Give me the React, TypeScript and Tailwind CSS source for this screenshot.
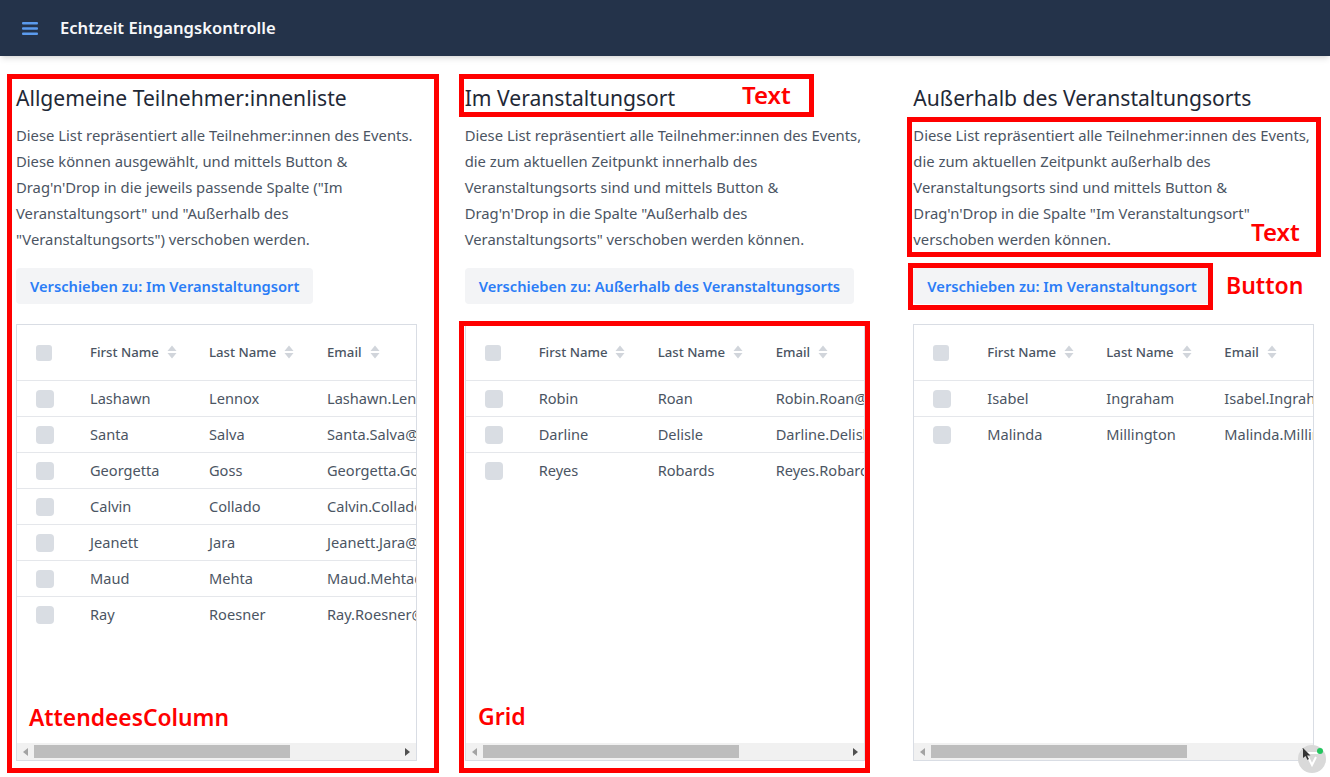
interface Attendee {
  first: string
  last: string
  email: string
}

interface ColumnProps {
  title: string
  lines: string[]
  button: string
  attendees: Attendee[]
}

const toAttendee = (first: string, last: string): Attendee => ({
  first,
  last,
  email: `${first}.${last}@example.com`,
})

const columns: ColumnProps[] = [
  {
    title: 'Allgemeine Teilnehmer:innenliste',
    lines: [
      'Diese List repräsentiert alle Teilnehmer:innen des Events.',
      'Diese können ausgewählt, und mittels Button &',
      'Drag\'n\'Drop in die jeweils passende Spalte ("Im',
      'Veranstaltungsort" und "Außerhalb des',
      '"Veranstaltungsorts") verschoben werden.',
    ],
    button: 'Verschieben zu: Im Veranstaltungsort',
    attendees: [
      toAttendee('Lashawn', 'Lennox'),
      toAttendee('Santa', 'Salva'),
      toAttendee('Georgetta', 'Goss'),
      toAttendee('Calvin', 'Collado'),
      toAttendee('Jeanett', 'Jara'),
      toAttendee('Maud', 'Mehta'),
      toAttendee('Ray', 'Roesner'),
    ],
  },
  {
    title: 'Im Veranstaltungsort',
    lines: [
      'Diese List repräsentiert alle Teilnehmer:innen des Events,',
      'die zum aktuellen Zeitpunkt innerhalb des',
      'Veranstaltungsorts sind und mittels Button &',
      'Drag\'n\'Drop in die Spalte "Außerhalb des',
      'Veranstaltungsorts" verschoben werden können.',
    ],
    button: 'Verschieben zu: Außerhalb des Veranstaltungsorts',
    attendees: [toAttendee('Robin', 'Roan'), toAttendee('Darline', 'Delisle'), toAttendee('Reyes', 'Robards')],
  },
  {
    title: 'Außerhalb des Veranstaltungsorts',
    lines: [
      'Diese List repräsentiert alle Teilnehmer:innen des Events,',
      'die zum aktuellen Zeitpunkt außerhalb des',
      'Veranstaltungsorts sind und mittels Button &',
      'Drag\'n\'Drop in die Spalte "Im Veranstaltungsort"',
      'verschoben werden können.',
    ],
    button: 'Verschieben zu: Im Veranstaltungsort',
    attendees: [toAttendee('Isabel', 'Ingraham'), toAttendee('Malinda', 'Millington')],
  },
]

function SortIcon() {
  return (
    <svg width="10" height="14" viewBox="0 0 10 14" className="ml-[8px] shrink-0 fill-[#d1d5db]">
      <path d="M5 0.5 9.5 6H0.5Z" />
      <path d="M5 13.5 0.5 8H9.5Z" />
    </svg>
  )
}

function Scrollbar() {
  return (
    <div className="mt-auto flex h-[17px] shrink-0 items-center bg-[#f1f1f1]">
      <div className="flex w-[17px] justify-center">
        <svg width="5" height="8" viewBox="0 0 5 8" className="fill-[#a3a3a3]">
          <path d="M5 0V8L0 4Z" />
        </svg>
      </div>
      <div className="h-[13px] w-[256px] bg-[#bdbdbd]" />
      <div className="ml-auto flex w-[17px] justify-center">
        <svg width="5" height="8" viewBox="0 0 5 8" className="fill-[#505050]">
          <path d="M0 0V8L5 4Z" />
        </svg>
      </div>
    </div>
  )
}

function Grid({ attendees }: { attendees: Attendee[] }) {
  return (
    <div className="mt-[20px] flex h-[437px] flex-col overflow-hidden border border-[#d9dde4]">
      <div className="flex h-[56px] shrink-0 items-center border-b border-[#e5e7eb] text-[13.2px] font-medium text-[#4b5563]">
        <div className="w-[73px] shrink-0 pl-[19px]">
          <div className="h-[16px] w-[16px] rounded-[3px] bg-[#d9dde3]" />
        </div>
        <div className="flex w-[119px] shrink-0 items-center">
          First Name
          <SortIcon />
        </div>
        <div className="flex w-[118px] shrink-0 items-center">
          Last Name
          <SortIcon />
        </div>
        <div className="flex shrink-0 items-center">
          Email
          <SortIcon />
        </div>
      </div>
      <div>
        {attendees.map((a) => (
          <div
            key={a.email}
            className="flex h-[36px] items-center border-b border-[#e5e7eb] text-[14.6px] whitespace-nowrap text-[#4b5563] last:border-b-0"
          >
            <div className="w-[73px] shrink-0 pl-[19px]">
              <div className="h-[18px] w-[18px] rounded-[4px] bg-[#d9dde3]" />
            </div>
            <div className="w-[119px] shrink-0">{a.first}</div>
            <div className="w-[118px] shrink-0">{a.last}</div>
            <div className="shrink-0">{a.email}</div>
          </div>
        ))}
      </div>
      <Scrollbar />
    </div>
  )
}

function AttendeesColumn({ title, lines, button, attendees }: ColumnProps) {
  return (
    <section className="min-w-0">
      <h2 className="text-[21.1px] leading-[28px] font-normal text-[#1f2937]">{title}</h2>
      <p className="mt-[10px] text-[14.8px] leading-[26px] whitespace-nowrap text-[#4b5563]">
        {lines.map((line) => (
          <span key={line} className="block">
            {line}
          </span>
        ))}
      </p>
      <button
        type="button"
        className="mt-[16px] block h-[36px] rounded-[4px] bg-[#f3f4f6] px-[14px] text-[14.7px] font-semibold text-[#2b7df6]"
      >
        {button}
      </button>
      <Grid attendees={attendees} />
    </section>
  )
}

function Annotation({ className }: { className: string }) {
  return <div className={`absolute border-[5px] border-[#ff0000] ${className}`} />
}

function Label({ className, children }: { className: string; children: string }) {
  return <span className={`absolute leading-none font-semibold text-[#ff0000] ${className}`}>{children}</span>
}

export default function App() {
  return (
    <div className="relative h-[777px] overflow-hidden bg-white font-['Noto_Sans',sans-serif]">
      <header className="flex h-[56px] items-center bg-[#24334a] pl-[22px] shadow-md">
        <svg width="16" height="13" viewBox="0 0 16 13" className="fill-[#5b9bee]">
          <rect y="0" width="16" height="2.4" rx="1" />
          <rect y="5.3" width="16" height="2.4" rx="1" />
          <rect y="10.6" width="16" height="2.4" rx="1" />
        </svg>
        <h1 className="ml-[22px] text-[16.6px] font-semibold text-[#f7f8fa]">Echtzeit Eingangskontrolle</h1>
      </header>
      <main className="grid grid-cols-3 gap-12 px-4 pt-[28px]">
        {columns.map((c) => (
          <AttendeesColumn key={c.title} {...c} />
        ))}
      </main>

      <Annotation className="top-[74px] left-[7px] h-[699px] w-[432px]" />
      <Annotation className="top-[321px] left-[459px] h-[452px] w-[411px]" />
      <Annotation className="top-[74px] left-[459px] h-[43px] w-[355px]" />
      <Annotation className="top-[117px] left-[907px] h-[140px] w-[414px]" />
      <Annotation className="top-[263px] left-[908px] h-[47px] w-[305px]" />
      <Label className="top-[83px] left-[742px] text-[24px]">Text</Label>
      <Label className="top-[220px] left-[1251px] text-[24px]">Text</Label>
      <Label className="top-[274px] left-[1226px] text-[23px]">Button</Label>
      <Label className="top-[707px] left-[29px] text-[22.8px]">AttendeesColumn</Label>
      <Label className="top-[705px] left-[478px] text-[23px]">Grid</Label>

      <div className="absolute top-[745px] left-[1298px] flex h-[28px] w-[28px] items-center justify-center rounded-full bg-[#d9d9d9]">
        <svg width="20" height="16" viewBox="0 0 20 16" className="fill-none stroke-white" strokeWidth="2">
          <path d="M1 2H19M6 6 10 14 14 6" />
        </svg>
      </div>
      <svg width="8" height="12" viewBox="0 0 8 12" className="absolute top-[748px] left-[1303px] fill-[#333]">
        <path d="M0 0V10L2.5 8 4.5 12 6 11 4 7.5H7.5Z" />
      </svg>
      <div className="absolute top-[748px] left-[1317px] h-[6px] w-[6px] rounded-full bg-[#22c55e]" />
    </div>
  )
}
